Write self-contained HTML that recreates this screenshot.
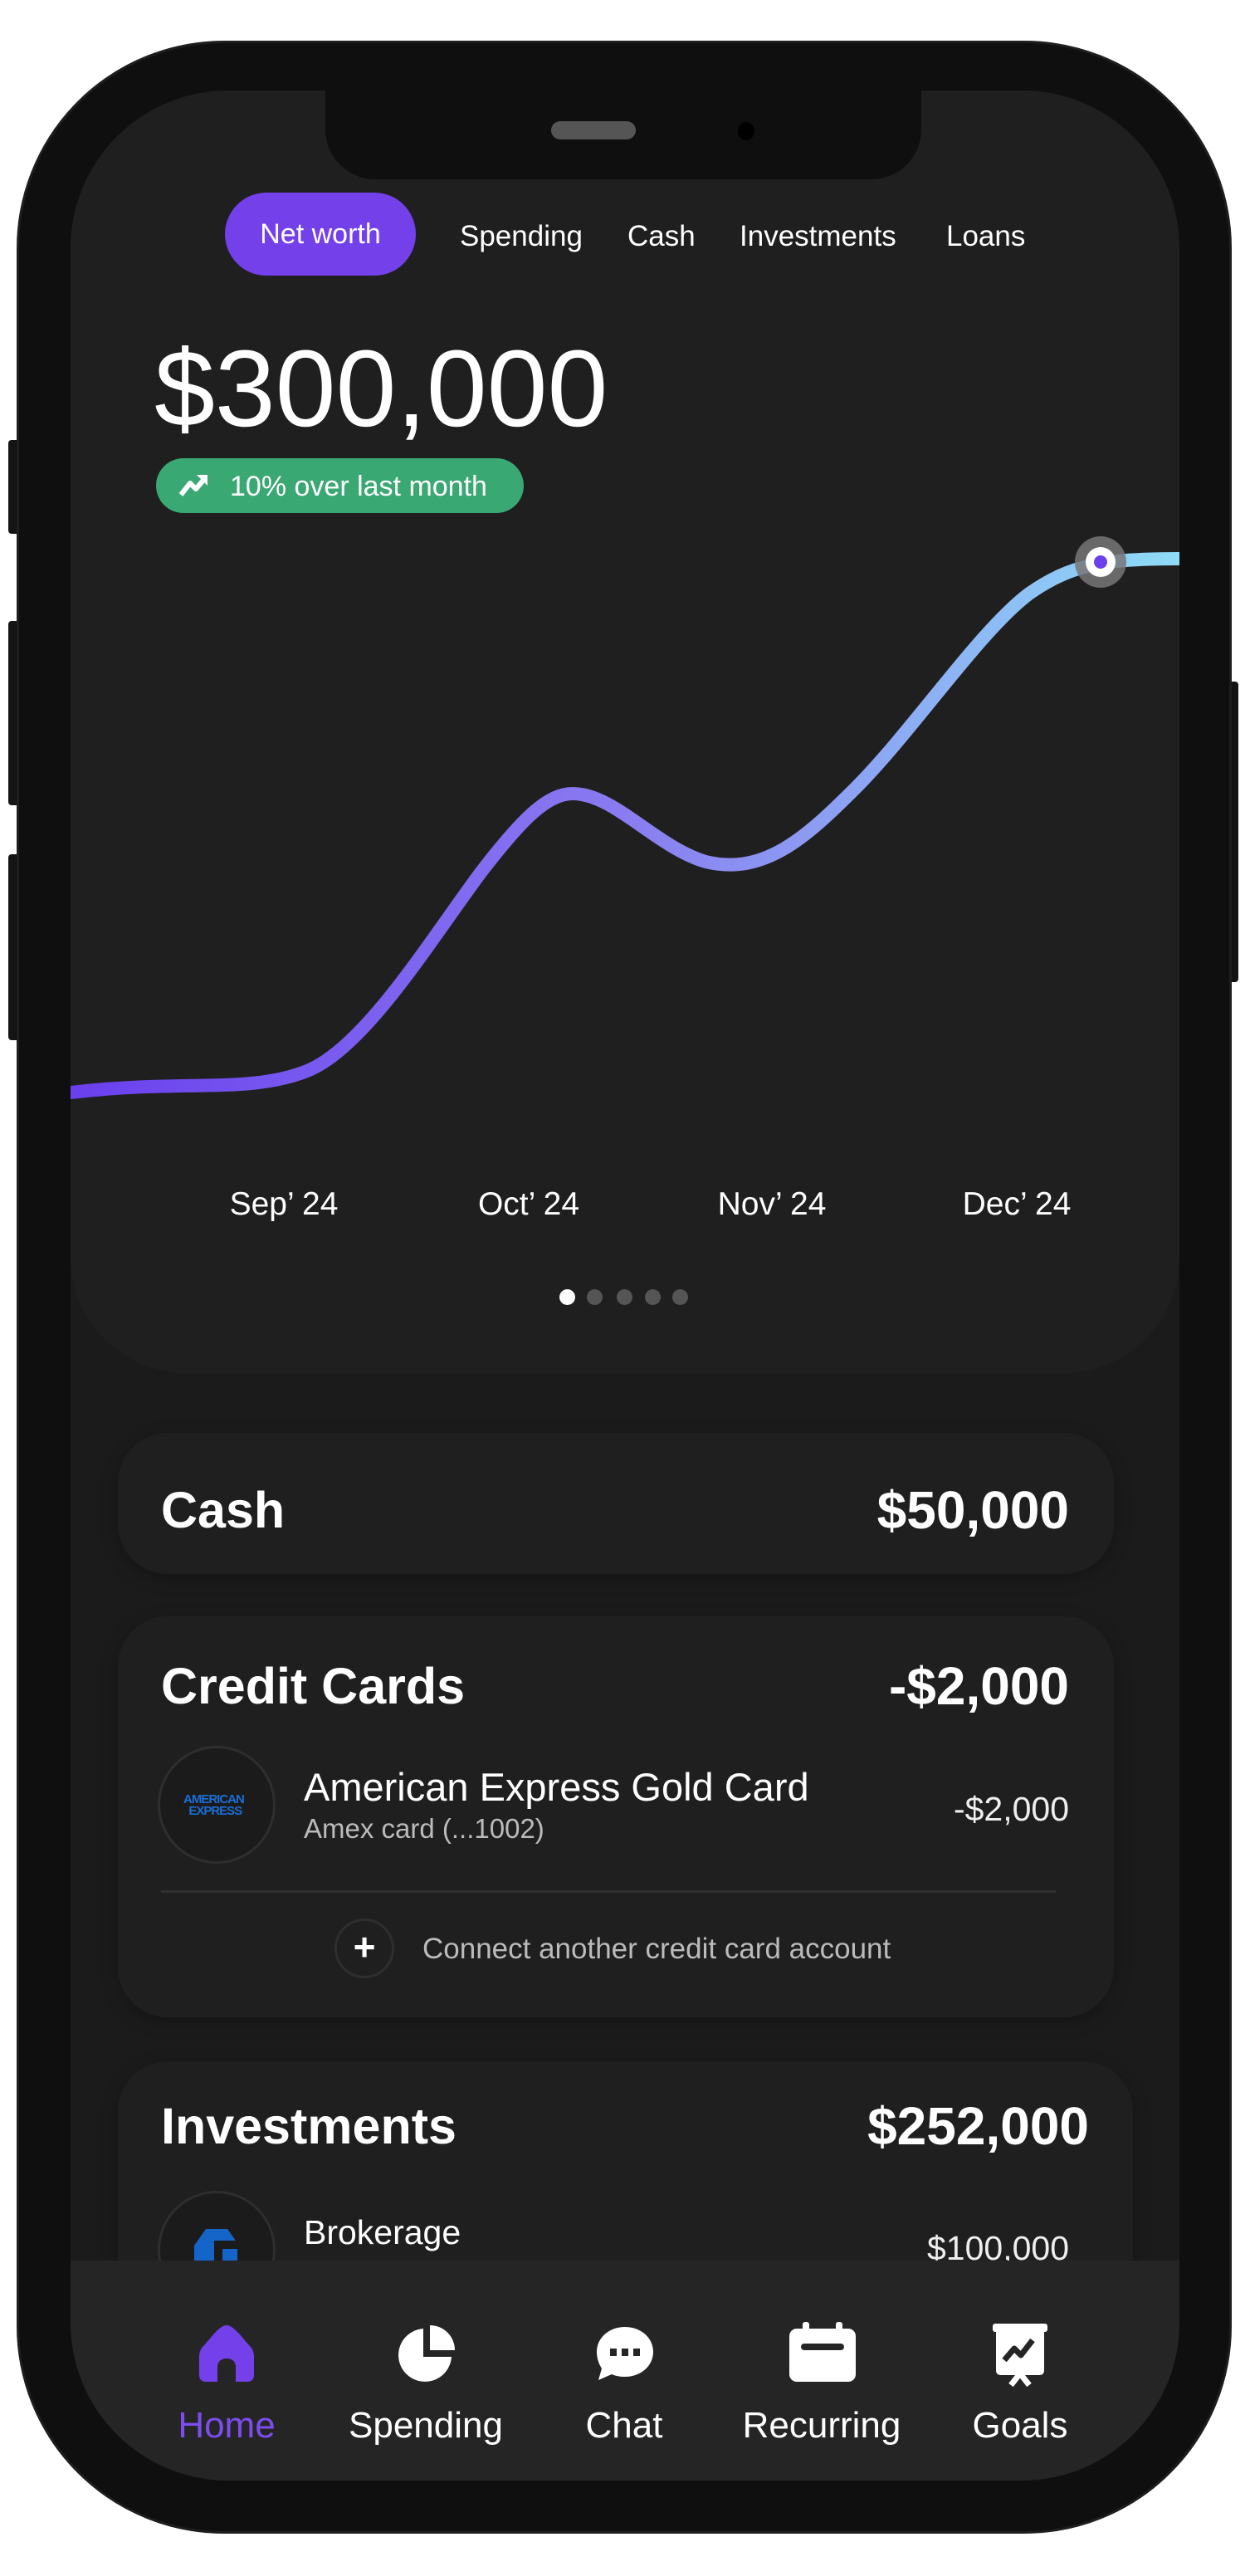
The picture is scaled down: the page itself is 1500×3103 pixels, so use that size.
<!DOCTYPE html>
<html><head><meta charset="utf-8"><style>
*{margin:0;padding:0;box-sizing:border-box}
html,body{width:1500px;height:3103px;background:#fff;overflow:hidden;font-family:"Liberation Sans",sans-serif;color:#fff}
.abs{position:absolute}
.phone{position:absolute;left:20px;top:49px;width:1464px;height:3003px;background:#0f0f0f;border-radius:250px;border:3px solid #1e1e1e}
.screen{position:absolute;left:85px;top:109px;width:1336px;height:2879px;background:#1b1b1b;border-radius:190px;overflow:hidden}
.btn{position:absolute;background:#141414;border-radius:4px}
.card{position:absolute;background:#1f1f1f;border-radius:60px;box-shadow:0 6px 20px rgba(0,0,0,.25)}
.t{position:absolute;white-space:nowrap;line-height:1}
.h{font-size:61px;font-weight:600}
.v{font-size:64px;font-weight:600;text-align:right}
</style></head><body>
<div class="btn" style="left:10px;top:530px;width:14px;height:113px"></div>
<div class="btn" style="left:10px;top:748px;width:14px;height:222px"></div>
<div class="btn" style="left:10px;top:1029px;width:14px;height:224px"></div>
<div class="btn" style="left:1480px;top:821px;width:12px;height:362px"></div>
<div class="phone"></div>
<div class="screen">
  <div class="abs" style="left:0;top:0;width:1336px;height:1545px;background:#1f1f1f;border-radius:0 0 140px 140px"></div>
  <div class="abs" style="left:307px;top:-20px;width:718px;height:127px;background:#0f0f0f;border-radius:0 0 60px 60px"></div>
  <div class="abs" style="left:579px;top:37px;width:102px;height:22px;background:#555;border-radius:11px"></div>
  <div class="abs" style="left:804px;top:38px;width:20px;height:22px;background:#000;border-radius:50%"></div>
  <div class="abs" style="left:186px;top:123px;width:230px;height:100px;background:#7340ea;border-radius:50px"></div>
  <div class="t" style="left:186px;top:156px;width:230px;text-align:center;font-size:34px">Net worth</div>
  <div class="t" style="left:469px;top:158px;font-size:35px">Spending</div>
  <div class="t" style="left:671px;top:158px;font-size:35px">Cash</div>
  <div class="t" style="left:806px;top:158px;font-size:35px">Investments</div>
  <div class="t" style="left:1055px;top:158px;font-size:35px">Loans</div>
  <div class="t" style="left:101px;top:293px;font-size:131px">$300,000</div>
  <div class="abs" style="left:103px;top:443px;width:443px;height:66px;background:#3aa872;border-radius:33px"></div>
  <svg class="abs" style="left:130px;top:459px" width="38" height="34" viewBox="0 0 38 34"><path d="M3 28 L14 14 L21 21 L32 8" stroke="#fff" stroke-width="6" fill="none" stroke-linejoin="round"/><path d="M22 4 H35 V17 Z" fill="#fff"/></svg>
  <div class="t" style="left:192px;top:460px;font-size:34px">10% over last month</div>
  <svg class="abs" style="left:0;top:0" width="1336" height="1545">
    <defs><linearGradient id="g" x1="0" y1="0" x2="1336" y2="0" gradientUnits="userSpaceOnUse"><stop offset="0" stop-color="#6a3fee"/><stop offset=".5" stop-color="#8a7cf0"/><stop offset="1" stop-color="#8fdcf7"/></linearGradient></defs>
    <path d="M0,1207 C135,1191 215,1209 285,1181 C355,1153 435,1021 495,941 C545,876 575,847 605,847 C655,847 705,911 765,929 C835,946 885,901 945,841 C1015,771 1095,651 1155,606 C1205,571 1245,564 1336,564" stroke="url(#g)" stroke-width="16" fill="none" stroke-linecap="round"/>
    <circle cx="1241" cy="568" r="31" fill="#777" opacity=".85"/>
    <circle cx="1241" cy="568" r="18" fill="#fff"/>
    <circle cx="1241" cy="568" r="8" fill="#6a3fee"/>
  </svg>
  <div class="t" style="left:157px;top:1322px;width:200px;text-align:center;font-size:39px">Sep’ 24</div>
  <div class="t" style="left:452px;top:1322px;width:200px;text-align:center;font-size:39px">Oct’ 24</div>
  <div class="t" style="left:745px;top:1322px;width:200px;text-align:center;font-size:39px">Nov’ 24</div>
  <div class="t" style="left:1040px;top:1322px;width:200px;text-align:center;font-size:39px">Dec’ 24</div>
  <div class="abs" style="left:589px;top:1444px;width:19px;height:19px;border-radius:50%;background:#fff"></div>
  <div class="abs" style="left:622px;top:1444px;width:19px;height:19px;border-radius:50%;background:#555"></div>
  <div class="abs" style="left:658px;top:1444px;width:19px;height:19px;border-radius:50%;background:#555"></div>
  <div class="abs" style="left:692px;top:1444px;width:19px;height:19px;border-radius:50%;background:#555"></div>
  <div class="abs" style="left:725px;top:1444px;width:19px;height:19px;border-radius:50%;background:#555"></div>

  <div class="card" style="left:57px;top:1617px;width:1200px;height:170px"></div>
  <div class="t h" style="left:109px;top:1680px">Cash</div>
  <div class="t v" style="left:800px;top:1678px;width:403px">$50,000</div>

  <div class="card" style="left:57px;top:1838px;width:1200px;height:483px"></div>
  <div class="t h" style="left:109px;top:1892px">Credit Cards</div>
  <div class="t v" style="left:800px;top:1890px;width:403px">-$2,000</div>
  <div class="abs" style="left:105px;top:1994px;width:142px;height:142px;border-radius:50%;border:3px solid #2e2e2e;background:#1b1b1b"></div>
  <div class="t" style="left:136px;top:2052px;font-size:15px;font-weight:700;color:#1a6fd6;letter-spacing:-1px;line-height:14px">AMERICAN<br>&nbsp;&nbsp;EXPRESS</div>
  <div class="t" style="left:281px;top:2020px;font-size:47px">American Express Gold Card</div>
  <div class="t" style="left:281px;top:2077px;font-size:33px;color:#bbb">Amex card (...1002)</div>
  <div class="t" style="left:900px;top:2050px;width:303px;text-align:right;font-size:41px;color:#eee">-$2,000</div>
  <div class="abs" style="left:109px;top:2168px;width:1078px;height:3px;background:#303030"></div>
  <div class="abs" style="left:318px;top:2202px;width:72px;height:72px;border-radius:50%;border:3px solid #2e2e2e"></div>
  <div class="t" style="left:318px;top:2213px;width:72px;text-align:center;font-size:46px;font-weight:700">+</div>
  <div class="t" style="left:424px;top:2221px;font-size:35px;color:#bbb">Connect another credit card account</div>

  <div class="card" style="left:57px;top:2374px;width:1223px;height:600px"></div>
  <div class="t h" style="left:109px;top:2422px">Investments</div>
  <div class="t v" style="left:800px;top:2420px;width:427px">$252,000</div>
  <div class="abs" style="left:105px;top:2530px;width:142px;height:142px;border-radius:50%;border:3px solid #2e2e2e;background:#1b1b1b"></div>
  <svg class="abs" style="left:143px;top:2570px" width="70" height="50"><path d="M6 50 V26 L20 6 H46 L56 20 H30 V50 Z M40 30 H58 V50 H40 Z" fill="#1565c8"/></svg>
  <div class="t" style="left:281px;top:2560px;font-size:41px">Brokerage</div>
  <div class="t" style="left:900px;top:2579px;width:303px;text-align:right;font-size:41px;color:#eee">$100,000</div>

  <div class="abs" style="left:0;top:2614px;width:1336px;height:265px;background:#252525"></div>
  <svg class="abs" style="left:153px;top:2690px" width="70" height="70" viewBox="0 0 70 70"><path d="M35 2 C40 2 44 6 50 12 L62 26 C66 30 68 34 68 40 V62 C68 67 65 70 60 70 H46 V52 C46 46 42 42 35 42 C28 42 24 46 24 52 V70 H10 C5 70 2 67 2 62 V40 C2 34 4 30 8 26 L20 12 C26 6 30 2 35 2Z" fill="#7340ea"/></svg>
  <div class="t" style="left:88px;top:2791px;width:200px;text-align:center;font-size:44px;color:#7d4cf0">Home</div>
  <svg class="abs" style="left:393px;top:2690px" width="72" height="72" viewBox="0 0 72 72"><path d="M32 6 A32 32 0 1 0 66 40 H32 Z" fill="#fff"/><path d="M40 2 V32 H70 A30 30 0 0 0 40 2Z" fill="#fff"/></svg>
  <div class="t" style="left:328px;top:2791px;width:200px;text-align:center;font-size:44px">Spending</div>
  <svg class="abs" style="left:632px;top:2692px" width="72" height="70" viewBox="0 0 72 70"><path d="M36 2 C55 2 70 15 70 32 C70 49 55 62 36 62 C30 62 25 61 20 59 L4 66 L8 52 C4 46 2 39 2 32 C2 15 17 2 36 2Z" fill="#fff"/><rect x="18" y="28" width="8" height="9" fill="#252525"/><rect x="32" y="28" width="8" height="9" fill="#252525"/><rect x="46" y="28" width="8" height="9" fill="#252525"/></svg>
  <div class="t" style="left:567px;top:2791px;width:200px;text-align:center;font-size:44px">Chat</div>
  <svg class="abs" style="left:864px;top:2686px" width="84" height="76" viewBox="0 0 84 76"><rect x="2" y="10" width="80" height="64" rx="9" fill="#fff"/><rect x="18" y="2" width="8" height="16" rx="3" fill="#fff"/><rect x="58" y="2" width="8" height="16" rx="3" fill="#fff"/><rect x="16" y="28" width="52" height="8" rx="4" fill="#252525"/></svg>
  <div class="t" style="left:805px;top:2791px;width:200px;text-align:center;font-size:44px">Recurring</div>
  <svg class="abs" style="left:1111px;top:2690px" width="66" height="76" viewBox="0 0 66 76"><rect x="0" y="0" width="66" height="10" rx="3" fill="#fff"/><path d="M4 8 H62 V56 C62 60 60 62 56 62 H10 C6 62 4 60 4 56Z" fill="#fff"/><path d="M14 44 L26 30 L34 38 L48 20" stroke="#252525" stroke-width="7" fill="none" stroke-linejoin="round"/><path d="M22 74 L33 60 L44 74" stroke="#fff" stroke-width="7" fill="none"/></svg>
  <div class="t" style="left:1044px;top:2791px;width:200px;text-align:center;font-size:44px">Goals</div>
</div>
</body></html>
